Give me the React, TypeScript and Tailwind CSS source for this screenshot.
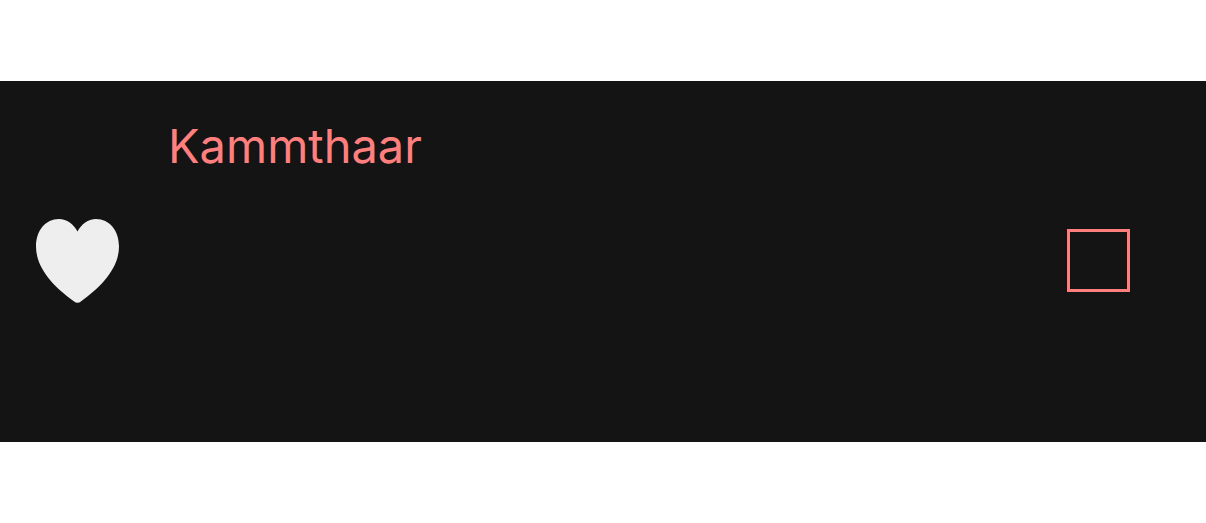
import { useState } from "react";

export default function App() {
  const [selected, setSelected] = useState(false);

  return (
    <main className="bg-white py-20 font-['Inter',sans-serif]">
      <div className="mt-px flex h-[361px] items-center bg-[#141414] pr-[76px] pb-0.5 pl-9">
        <button type="button" aria-label="Favourite" className="shrink-0">
          <svg viewBox="0 0 83 84" className="h-[84px] w-[83px] fill-[#eeeeee]">
            <path d="M41.5 12.5C37.5 5 31 0 23 0C9.5 0 0 11.5 0 27.5C0 50.5 20 69.5 37.8 82.2C40.2 84.2 42.8 84.2 45.2 82.2C63 69.5 83 50.5 83 27.5C83 11.5 73.5 0 60 0C52 0 45.5 5 41.5 12.5Z" />
          </svg>
        </button>
        <label
          htmlFor="kammthaar"
          className="ml-[49px] flex-1 self-start pt-9 text-[47px] leading-[58px] text-[#ff7f7f]"
        >
          Kammthaar
        </label>
        <input
          id="kammthaar"
          type="checkbox"
          checked={selected}
          onChange={(event) => setSelected(event.target.checked)}
          className="size-[63px] shrink-0 appearance-none border-3 border-[#ff7f7f] checked:bg-[#ff7f7f]"
        />
      </div>
    </main>
  );
}
